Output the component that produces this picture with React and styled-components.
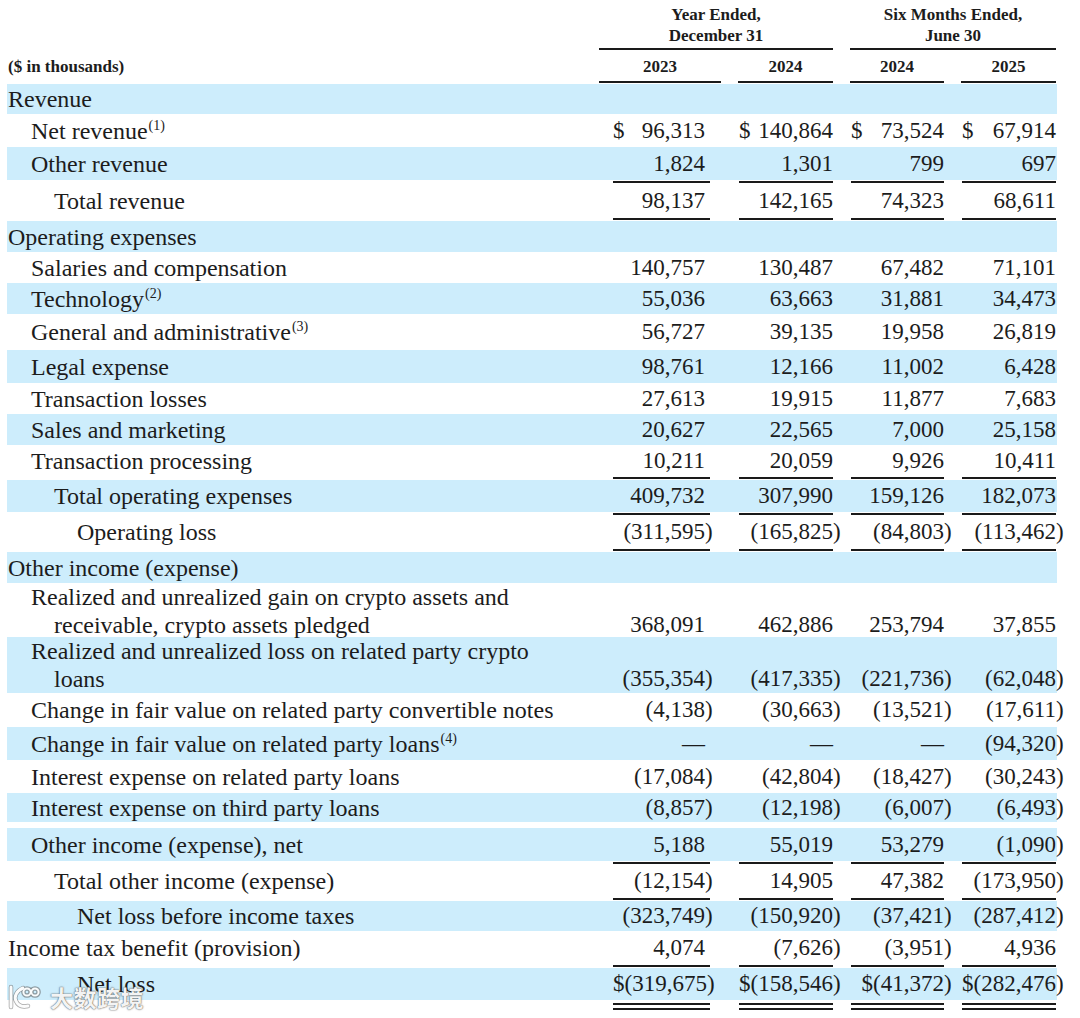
import React from 'react';
import styled, { createGlobalStyle } from 'styled-components';

const GlobalStyle = createGlobalStyle`
  html, body {
    margin: 0;
    padding: 0;
    background: #fff;
  }
  body {
    font-family: "Liberation Serif", "Times New Roman", serif;
    color: #1c1c1c;
  }
`;

const INK = '#1a1a1a';
const STRIPE = '#cdedfc';

// box of each value column inside its grid track: left margin, right margin, right padding
const COL_BOX = [
  { ml: 14, mr: 11, pr: 5 },
  { ml: 1, mr: 0, pr: 0 },
  { ml: 1, mr: 0, pr: 0 },
  { ml: 1, mr: 0, pr: 0 },
];

const Page = styled.div`
  position: relative;
  width: 1080px;
  height: 1018px;
  overflow: hidden;
  background: #fff;
`;

const Table = styled.div`
  margin-left: 7px;
  width: 1050px;
  padding-top: 4px;
`;

const Grid = styled.div`
  display: grid;
  grid-template-columns: 575px 122px 95px 94px 95px;
  column-gap: 17px;
`;

const HeadRow = styled(Grid)`
  align-items: end;
`;

const GroupHead = styled.div`
  grid-column: ${(p) => p.$col} / span 2;
  text-align: center;
  font-weight: bold;
  font-size: 17px;
  line-height: 21px;
  padding-bottom: 2px;
  border-bottom: 2px solid ${INK};
`;

const UnitsLabel = styled.div`
  font-weight: bold;
  font-size: 17px;
  line-height: 20px;
  padding: 7px 0 6px 1px;
`;

const YearHead = styled.div`
  text-align: center;
  font-weight: bold;
  font-size: 17px;
  line-height: 20px;
  padding: 7px 0 4px;
  border-bottom: 2px solid ${INK};
`;

const Body = styled.div`
  margin-top: 1px;
`;

const Row = styled(Grid)`
  height: ${(p) => p.$h}px;
  align-items: center;
  background: ${(p) => (p.$striped ? STRIPE : 'transparent')};
`;

const Label = styled.div`
  font-size: 24px;
  line-height: 28px;
  white-space: nowrap;
  padding-left: ${(p) => 1 + (p.$hang ? p.$level + 1 : p.$level) * 23}px;
  text-indent: ${(p) => (p.$hang ? -23 : 0)}px;
`;

const Sup = styled.sup`
  font-size: 14px;
  line-height: 0;
  vertical-align: 9px;
  margin-left: 1px;
`;

const Value = styled.div`
  display: flex;
  justify-content: space-between;
  align-items: baseline;
  align-self: ${(p) => (p.$end ? 'end' : 'center')};
  font-size: 23px;
  line-height: 28px;
  white-space: nowrap;
  margin: 0 ${(p) => p.$mr}px 0 ${(p) => p.$ml}px;
  padding-right: ${(p) => p.$pr}px;
`;

const Num = styled.span`
  margin-left: auto;
`;

const Close = styled.span`
  display: inline-block;
  width: 0;
`;

const Spacer = styled.div`
  height: ${(p) => p.$h}px;
`;

const RuleRow = styled(Grid)`
  height: ${(p) => p.$h}px;
  align-items: start;
`;

const Rule = styled.div`
  grid-column: ${(p) => p.$col};
  margin: ${(p) => p.$top}px ${(p) => p.$mr}px 0 ${(p) => p.$ml}px;
  height: ${(p) => (p.$double ? 3 : 0)}px;
  border-top: 2px solid ${INK};
  border-bottom: ${(p) => (p.$double ? `2px solid ${INK}` : 'none')};
`;

const Watermark = styled.div`
  position: absolute;
  left: 6px;
  top: 982px;
  display: flex;
  align-items: center;
  gap: 8px;
  color: rgba(255, 255, 255, 0.95);
  font-family: "Noto Sans CJK SC", sans-serif;
  font-weight: bold;
  font-size: 23px;
  line-height: 30px;
  letter-spacing: 0.5px;
  text-shadow: 0 0 1px rgba(70, 70, 70, 0.9), 0 0 2px rgba(70, 70, 70, 0.7);
`;

const rows = [
  { label: 'Revenue', level: 0, h: 30, s: true },
  { label: 'Net revenue', sup: '(1)', level: 1, h: 33, vals: ['96,313', '140,864', '73,524', '67,914'], dollar: 'wide' },
  { label: 'Other revenue', level: 1, h: 33, s: true, vals: ['1,824', '1,301', '799', '697'], rule: 'single' },
  { label: 'Total revenue', level: 2, h: 33, vals: ['98,137', '142,165', '74,323', '68,611'], rule: 'single' },
  { label: 'Operating expenses', level: 0, h: 31, s: true },
  { label: 'Salaries and compensation', level: 1, h: 31, vals: ['140,757', '130,487', '67,482', '71,101'] },
  { label: 'Technology', sup: '(2)', level: 1, h: 31, s: true, vals: ['55,036', '63,663', '31,881', '34,473'] },
  { label: 'General and administrative', sup: '(3)', level: 1, h: 36, vals: ['56,727', '39,135', '19,958', '26,819'] },
  { label: 'Legal expense', level: 1, h: 33, s: true, vals: ['98,761', '12,166', '11,002', '6,428'] },
  { label: 'Transaction losses', level: 1, h: 31, vals: ['27,613', '19,915', '11,877', '7,683'] },
  { label: 'Sales and marketing', level: 1, h: 31, s: true, vals: ['20,627', '22,565', '7,000', '25,158'] },
  { label: 'Transaction processing', level: 1, h: 31, vals: ['10,211', '20,059', '9,926', '10,411'], rule: 'single' },
  { label: 'Total operating expenses', level: 2, h: 32, s: true, vals: ['409,732', '307,990', '159,126', '182,073'], rule: 'single' },
  { label: 'Operating loss', level: 3, h: 32, vals: ['(311,595)', '(165,825)', '(84,803)', '(113,462)'], rule: 'single' },
  { label: 'Other income (expense)', level: 0, h: 31, s: true },
  {
    label: ['Realized and unrealized gain on crypto assets and', 'receivable, crypto assets pledged'],
    level: 1, h: 54, vals: ['368,091', '462,886', '253,794', '37,855'],
  },
  {
    label: ['Realized and unrealized loss on related party crypto', 'loans'],
    level: 1, h: 56, s: true, vals: ['(355,354)', '(417,335)', '(221,736)', '(62,048)'],
  },
  { label: 'Change in fair value on related party convertible notes', level: 1, h: 34, vals: ['(4,138)', '(30,663)', '(13,521)', '(17,611)'] },
  { label: 'Change in fair value on related party loans', sup: '(4)', level: 1, h: 33, s: true, vals: ['—', '—', '—', '(94,320)'] },
  { label: 'Interest expense on related party loans', level: 1, h: 33, vals: ['(17,084)', '(42,804)', '(18,427)', '(30,243)'] },
  { label: 'Interest expense on third party loans', level: 1, h: 29, s: true, vals: ['(8,857)', '(12,198)', '(6,007)', '(6,493)'], gap: 6 },
  { label: 'Other income (expense), net', level: 1, h: 33, s: true, vals: ['5,188', '55,019', '53,279', '(1,090)'], rule: 'single' },
  { label: 'Total other income (expense)', level: 2, h: 32, vals: ['(12,154)', '14,905', '47,382', '(173,950)'], rule: 'single' },
  { label: 'Net loss before income taxes', level: 3, h: 30, s: true, vals: ['(323,749)', '(150,920)', '(37,421)', '(287,412)'] },
  { label: 'Income tax benefit (provision)', level: 0, h: 33, vals: ['4,074', '(7,626)', '(3,951)', '4,936'], rule: 'single' },
  { label: 'Net loss', level: 3, h: 32, s: true, vals: ['(319,675)', '(158,546)', '(41,372)', '(282,476)'], dollar: 'tight', rule: 'double' },
];

const Amount = ({ text, prefix }) => {
  const open = prefix || '';
  if (text.endsWith(')')) {
    return (
      <Num>
        {open}
        {text.slice(0, -1)}
        <Close>)</Close>
      </Num>
    );
  }
  return (
    <Num>
      {open}
      {text}
    </Num>
  );
};

const RowLabel = ({ row }) => {
  if (Array.isArray(row.label)) {
    return (
      <Label $level={row.level} $hang>
        {row.label[0]}
        <br />
        {row.label[1]}
      </Label>
    );
  }
  return (
    <Label $level={row.level}>
      {row.label}
      {row.sup && <Sup>{row.sup}</Sup>}
    </Label>
  );
};

const Rules = ({ double }) => (
  <RuleRow $h={double ? 12 : 4}>
    {COL_BOX.map((b, i) => (
      <Rule
        key={i}
        $col={i + 2}
        $top={double ? 3 : 1}
        $ml={b.ml}
        $mr={b.mr}
        $double={double}
      />
    ))}
  </RuleRow>
);

const LogoMark = () => (
  <svg width="36" height="28" viewBox="0 0 36 28">
    <g fill="none" stroke="rgba(90,90,90,0.55)" strokeWidth="4.5" strokeLinecap="round">
      <path d="M5 4 L5 24" />
      <path d="M17 5 C10 8 8 14 10 18 C12 23 17 24 22 23" />
      <circle cx="21" cy="9" r="3.6" />
      <circle cx="29" cy="9" r="3.6" />
    </g>
    <g fill="none" stroke="rgba(255,255,255,0.97)" strokeWidth="3" strokeLinecap="round">
      <path d="M5 4 L5 24" />
      <path d="M17 5 C10 8 8 14 10 18 C12 23 17 24 22 23" />
    </g>
    <g fill="none" stroke="rgba(255,255,255,0.97)" strokeWidth="2">
      <circle cx="21" cy="9" r="3.6" />
      <circle cx="29" cy="9" r="3.6" />
    </g>
  </svg>
);

const App = () => {
  return (
    <Page>
      <GlobalStyle />
      <Table>
        <HeadRow>
          <GroupHead $col={2}>
            Year Ended,
            <br />
            December 31
          </GroupHead>
          <GroupHead $col={4}>
            Six Months Ended,
            <br />
            June 30
          </GroupHead>
        </HeadRow>
        <HeadRow>
          <UnitsLabel>($ in thousands)</UnitsLabel>
          <YearHead>2023</YearHead>
          <YearHead>2024</YearHead>
          <YearHead>2024</YearHead>
          <YearHead>2025</YearHead>
        </HeadRow>

        <Body>
          {rows.map((row, idx) => (
            <React.Fragment key={idx}>
              <Row $h={row.h} $striped={row.s}>
                <RowLabel row={row} />
                {row.vals &&
                  row.vals.map((v, i) => (
                    <Value
                      key={i}
                      $ml={COL_BOX[i].ml}
                      $mr={COL_BOX[i].mr}
                      $pr={COL_BOX[i].pr}
                      $end={Array.isArray(row.label)}
                    >
                      {row.dollar === 'wide' && <span>$</span>}
                      <Amount text={v} prefix={row.dollar === 'tight' ? '$' : ''} />
                    </Value>
                  ))}
              </Row>
              {row.gap && <Spacer $h={row.gap} />}
              {row.rule && <Rules double={row.rule === 'double'} />}
            </React.Fragment>
          ))}
        </Body>
      </Table>

      <Watermark>
        <LogoMark />
        <span>大数跨境</span>
      </Watermark>
    </Page>
  );
};

export default App;
